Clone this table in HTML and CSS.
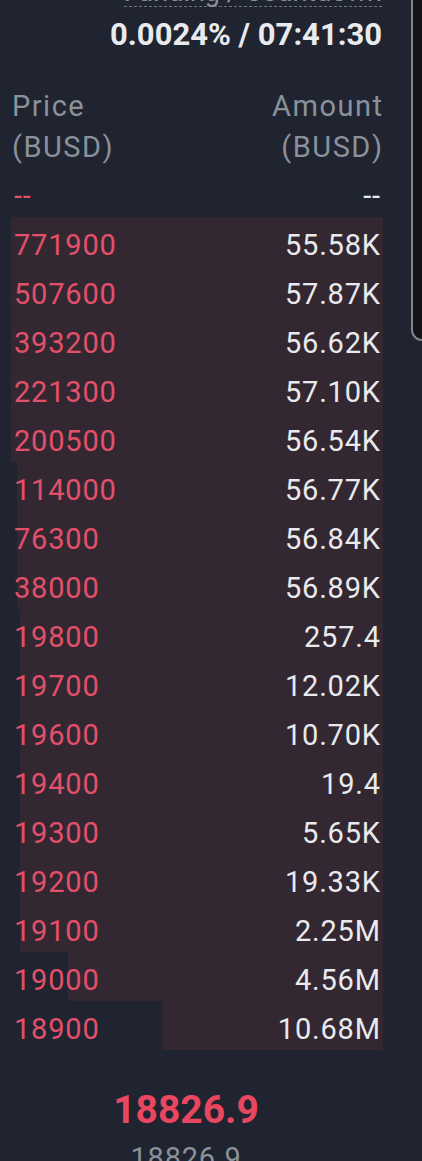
FILE: index.html
```html
<!DOCTYPE html>
<html lang="en">
<head>
<meta charset="utf-8">
<title>Order book</title>
<link rel="stylesheet" href="styles.css">
</head>
<body>
<div class="page">
  <main class="book">
    <section class="funding">
      <div class="funding-label">Funding / Countdown</div>
      <div class="funding-value">0.0024% / 07:41:30</div>
    </section>

    <header class="book-head">
      <div class="col">Price<br>(BUSD)</div>
      <div class="col right">Amount<br>(BUSD)</div>
    </header>

    <div class="rows">
      <div class="row empty"><span class="price">--</span><span class="amount">--</span></div>
      <div class="row" style="--w:100%"><span class="price">771900</span><span class="amount">55.58K</span></div>
      <div class="row" style="--w:100%"><span class="price">507600</span><span class="amount">57.87K</span></div>
      <div class="row" style="--w:100%"><span class="price">393200</span><span class="amount">56.62K</span></div>
      <div class="row" style="--w:100%"><span class="price">221300</span><span class="amount">57.10K</span></div>
      <div class="row" style="--w:100%"><span class="price">200500</span><span class="amount">56.54K</span></div>
      <div class="row" style="--w:98.4%"><span class="price">114000</span><span class="amount">56.77K</span></div>
      <div class="row" style="--w:98.4%"><span class="price">76300</span><span class="amount">56.84K</span></div>
      <div class="row" style="--w:98.4%"><span class="price">38000</span><span class="amount">56.89K</span></div>
      <div class="row" style="--w:97.6%"><span class="price">19800</span><span class="amount">257.4</span></div>
      <div class="row" style="--w:97.6%"><span class="price">19700</span><span class="amount">12.02K</span></div>
      <div class="row" style="--w:97.6%"><span class="price">19600</span><span class="amount">10.70K</span></div>
      <div class="row" style="--w:97.6%"><span class="price">19400</span><span class="amount">19.4</span></div>
      <div class="row" style="--w:97.6%"><span class="price">19300</span><span class="amount">5.65K</span></div>
      <div class="row" style="--w:97.6%"><span class="price">19200</span><span class="amount">19.33K</span></div>
      <div class="row" style="--w:97.6%"><span class="price">19100</span><span class="amount">2.25M</span></div>
      <div class="row" style="--w:84.7%"><span class="price">19000</span><span class="amount">4.56M</span></div>
      <div class="row" style="--w:59.4%"><span class="price">18900</span><span class="amount">10.68M</span></div>
    </div>

    <section class="last">
      <div class="last-price">18826.9</div>
      <div class="mark-price">18826.9</div>
    </section>
  </main>
  <aside class="side"></aside>
</div>
</body>
</html>
```

FILE: styles.css
```css
* { box-sizing: border-box; }

html, body {
  margin: 0;
  padding: 0;
  background: #1f2430;
  height: 100%;
  overflow: hidden;
}

body {
  font-family: Roboto, "Liberation Sans", sans-serif;
  color: #e9eaee;
}

.page {
  display: flex;
  width: 422px;
  height: 1161px;
  overflow: hidden;
}

.book {
  width: 411px;
  flex: none;
  padding: 0 28px 0 11px;
}

.side {
  flex: 1;
  align-self: flex-start;
  height: 341px;
  background: #121419;
  border-left: 2px solid #80858c;
  border-bottom: 2px solid #80858c;
  border-bottom-left-radius: 14px;
}

/* Funding */
.funding {
  display: flex;
  flex-direction: column;
  align-items: flex-end;
  margin-top: -22px;
  padding-right: 1px;
}

.funding-label {
  font-size: 27px;
  line-height: 28px;
  color: #8a919b;
  border-bottom: 1px dashed #6b727d;
}

.funding-value {
  margin-top: 8px;
  font-size: 31px;
  line-height: 40px;
  font-weight: 700;
  color: #e9eaee;
}

/* Header */
.book-head {
  display: flex;
  justify-content: space-between;
  margin-top: 31px;
  padding: 0 1px;
  font-size: 29px;
  line-height: 41px;
  letter-spacing: 1.5px;
  color: #8a919b;
}

.book-head .right { text-align: right; margin-right: -1.5px; }

/* Rows */
.row {
  --w: 0%;
  display: flex;
  justify-content: space-between;
  height: 49px;
  padding: 8px 3px 0;
  font-size: 29px;
  line-height: 41px;
  letter-spacing: 0.8px;
  background: linear-gradient(to left, #332832 var(--w), transparent var(--w));
}

.row .price { color: #e2506a; }
.row .amount { color: #e9eaee; margin-right: -0.8px; }

/* Last price */
.last {
  display: flex;
  flex-direction: column;
  align-items: center;
  padding-right: 22px;
  margin-top: 37px;
}

.last-price {
  font-size: 39px;
  line-height: 46px;
  font-weight: 700;
  color: #e9475f;
}

.mark-price {
  margin-top: 7px;
  font-size: 29px;
  line-height: 36px;
  letter-spacing: 0.8px;
  color: #8a919b;
}
```
